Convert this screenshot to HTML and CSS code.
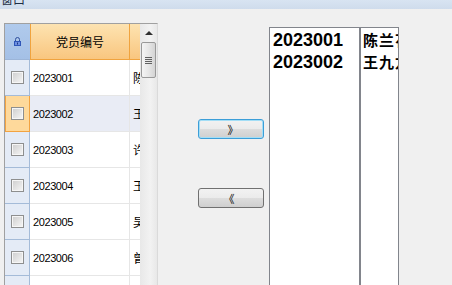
FILE: index.html
```html
<!DOCTYPE html>
<html lang="zh-CN">
<head>
    <meta charset="UTF-8">
    <meta name="viewport" content="width=device-width, initial-scale=1.0">
    <title>窗口</title>
    <link rel="stylesheet" href="styles.css">
</head>
<body>
    <div class="titlebar"><span class="title-text">窗口</span></div>

    <div class="main">
        <div class="grid">
            <div class="table">
                <div class="row header">
                    <div class="cell sel">
                        <svg width="7" height="9" viewBox="0 0 7 9">
                            <path d="M1.5 4.5V2.5a2 2 0 0 1 4 0V4.5" fill="none" stroke="#2f4f9c" stroke-width="1"/>
                            <rect x="0" y="4" width="7" height="5" fill="#2f56b8"/>
                            <rect x="1" y="5" width="5" height="3" fill="#6d8fe0"/>
                            <rect x="3" y="5.5" width="1" height="2" fill="#1d3780"/>
                        </svg>
                    </div>
                    <div class="cell col1">党员编号</div>
                    <div class="cell col2"></div>
                </div>
                <div class="row">
                    <div class="cell sel"><span class="check"></span></div>
                    <div class="cell col1">2023001</div>
                    <div class="cell col2">陈兰</div>
                </div>
                <div class="row selected">
                    <div class="cell sel"><span class="check"></span></div>
                    <div class="cell col1">2023002</div>
                    <div class="cell col2">王九</div>
                </div>
                <div class="row">
                    <div class="cell sel"><span class="check"></span></div>
                    <div class="cell col1">2023003</div>
                    <div class="cell col2">许明</div>
                </div>
                <div class="row">
                    <div class="cell sel"><span class="check"></span></div>
                    <div class="cell col1">2023004</div>
                    <div class="cell col2">王强</div>
                </div>
                <div class="row">
                    <div class="cell sel"><span class="check"></span></div>
                    <div class="cell col1">2023005</div>
                    <div class="cell col2">吴芳</div>
                </div>
                <div class="row">
                    <div class="cell sel"><span class="check"></span></div>
                    <div class="cell col1">2023006</div>
                    <div class="cell col2">曾伟</div>
                </div>
                <div class="row">
                    <div class="cell sel"><span class="check"></span></div>
                    <div class="cell col1">2023007</div>
                    <div class="cell col2">李华</div>
                </div>
            </div>
            <div class="scrollbar">
                <div class="scroll-up"><span class="arrow"></span></div>
                <div class="thumb">
                    <svg width="7" height="7" viewBox="0 0 7 7">
                        <path d="M0 0.5H7M0 2.5H7M0 4.5H7M0 6.5H7" stroke="#606060" stroke-width="1"/>
                    </svg>
                </div>
            </div>
        </div>

        <div class="actions">
            <button class="btn focused">》</button>
            <button class="btn">《</button>
        </div>

        <div class="lists">
            <div class="listbox ids">
                <div>2023001</div>
                <div>2023002</div>
            </div>
            <div class="listbox names">
                <div>陈兰花</div>
                <div>王九龙</div>
            </div>
        </div>
    </div>
</body>
</html>
```

FILE: styles.css
```css
html, body {
    margin: 0;
    height: 100%;
    overflow: hidden;
}
body {
    background-color: #f0f0f0;
    font-family: "Liberation Sans", "Noto Sans CJK SC", sans-serif;
    color: #000;
}
.titlebar {
    height: 9px;
    overflow: hidden;
    background: linear-gradient(#d8e4f2, #cfdcec);
}
.title-text {
    display: block;
    margin-top: -8px;
    padding-left: 1px;
    font-family: "Noto Sans CJK SC", sans-serif;
    font-size: 12px;
    line-height: 14px;
    color: #1e2f45;
}
.main {
    display: flex;
    align-items: flex-start;
}

/* data grid */
.grid {
    display: flex;
    margin: 14px 0 0 4px;
    height: 300px;
    border-top: 1px solid #a0a0a0;
    border-left: 1px solid #a0a0a0;
    border-right: 1px solid #dadada;
    overflow: hidden;
}
.table {
    width: 135px;
    background-color: #fff;
}
.row {
    display: grid;
    grid-template-columns: 25px 100px 10px;
    height: 36px;
}
.cell {
    box-sizing: border-box;
    display: flex;
    align-items: center;
    overflow: hidden;
    white-space: nowrap;
    border-bottom: 1px solid #e6e6e6;
}
.cell.sel {
    justify-content: center;
    background-color: #e4ebf6;
    border-right: 1px solid #a4bbd8;
    border-bottom-color: #a4bbd8;
}
.cell.col1 {
    padding-left: 3px;
    border-right: 1px solid #e6e6e6;
    font-size: 11px;
    letter-spacing: -0.4px;
}
.cell.col2 {
    padding-left: 3px;
    font-family: "Noto Sans CJK SC", sans-serif;
    font-size: 12px;
}
.header .cell.sel {
    background: linear-gradient(#b0caec, #a4c0e6);
    border-right: none;
    border-bottom-color: #9cb5d8;
    padding-right: 1px;
}
.header .cell.col1,
.header .cell.col2 {
    background: linear-gradient(#fde3b1, #f9c67f);
    border-bottom-color: #f0a33e;
}
.header .cell.col1 {
    justify-content: center;
    padding-left: 0;
    border-left: 1px solid #f0a33e;
    border-right: 1px solid #f0a33e;
    font-family: "Noto Sans CJK SC", sans-serif;
    font-size: 12px;
    letter-spacing: 0;
}
.selected .cell {
    background-color: #e9ecf5;
}
.selected .cell.sel {
    background-color: #fed99b;
    border: 1px solid #f2a341;
    border-top: none;
}
.check {
    box-sizing: border-box;
    width: 13px;
    height: 13px;
    border: 1px solid #8e8f8f;
    background: linear-gradient(135deg, #cdcdcd, #f7f7f7);
    box-shadow: inset 0 0 0 1px #f6f6f6;
}

/* scrollbar */
.scrollbar {
    width: 17px;
    background: linear-gradient(to right, #e8e8e8, #f2f2f2 60%, #e8e8e8);
}
.scroll-up {
    height: 17px;
    display: flex;
    align-items: center;
    justify-content: center;
}
.arrow {
    width: 0;
    height: 0;
    border-left: 4px solid transparent;
    border-right: 4px solid transparent;
    border-bottom: 4px solid #303030;
}
.thumb {
    box-sizing: border-box;
    height: 36px;
    margin: 1px 1px 0 1px;
    border: 1px solid #999;
    border-radius: 2px;
    background: linear-gradient(to right, #f4f4f4, #e6e6e6 50%, #d4d4d4);
    display: flex;
    align-items: center;
    justify-content: center;
}

/* move buttons */
.actions {
    width: 111px;
    padding-top: 110px;
    display: flex;
    flex-direction: column;
    gap: 49px;
}
.btn {
    width: 66px;
    height: 20px;
    margin-left: 40px;
    padding: 0 0 0 4px;
    border: 1px solid #707070;
    border-radius: 3px;
    background: linear-gradient(#f2f2f2 0%, #ebebeb 50%, #dddddd 50%, #cfcfcf 100%);
    font-family: "Noto Sans CJK SC", sans-serif;
    font-size: 11px;
    line-height: 18px;
    color: #000;
}
.btn + .btn {
    padding: 0 4px 0 0;
}
.btn.focused {
    border-color: #3c9ed8;
    box-shadow: inset 0 0 0 1px #a3def6;
}

/* selected lists */
.lists {
    display: flex;
    margin-top: 18px;
}
.listbox {
    box-sizing: border-box;
    height: 300px;
    border: 1px solid #82858c;
    background-color: #fff;
    overflow: hidden;
    white-space: nowrap;
    padding-top: 1px;
    line-height: 22px;
    font-weight: bold;
}
.listbox.ids {
    width: 91px;
    padding-left: 3px;
    font-size: 18px;
}
.listbox.names {
    width: 39px;
    padding-left: 2px;
    font-family: "Noto Sans CJK SC", sans-serif;
    font-size: 15px;
    letter-spacing: 1px;
}
```
